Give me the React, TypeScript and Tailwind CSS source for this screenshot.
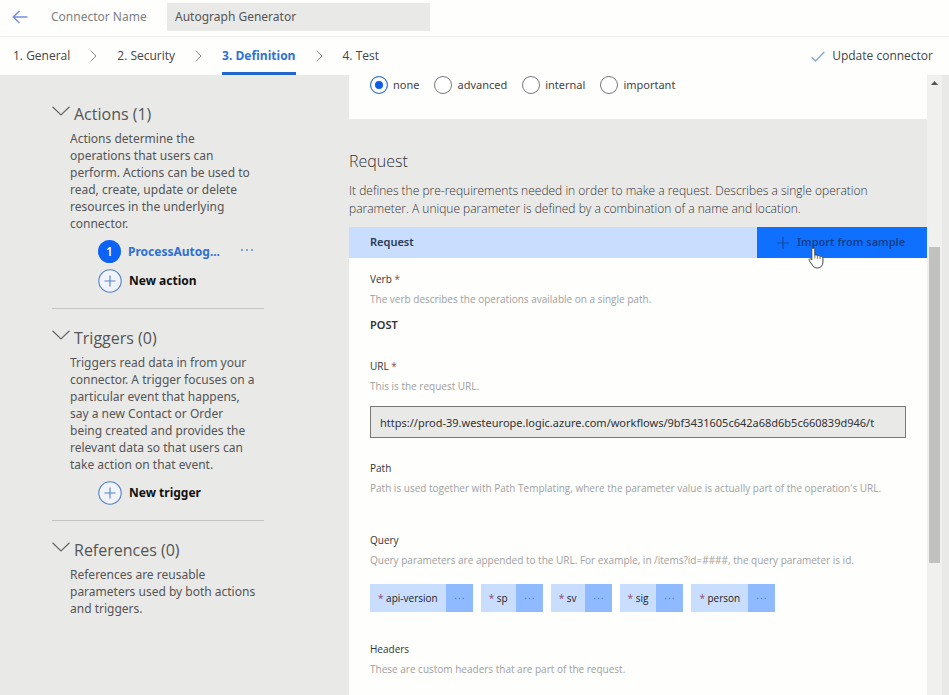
import type { ReactNode } from "react";

const steps = ["1. General", "2. Security", "3. Definition", "4. Test"];
const visibility = ["none", "advanced", "internal", "important"];
const queryParams = ["api-version", "sp", "sv", "sig", "person"];

function Dots({ className }: { className?: string }) {
  return (
    <svg viewBox="0 0 14 4" className={className} fill="currentColor" aria-hidden="true">
      <circle cx="2" cy="2" r="0.9" />
      <circle cx="7" cy="2" r="0.9" />
      <circle cx="12" cy="2" r="0.9" />
    </svg>
  );
}

function NavSection({ title, text, children }: { title: string; text: string; children?: ReactNode }) {
  return (
    <section className="border-b border-[#c4c4c3] pt-[14px] pb-[13px] last:border-b-0">
      <h2 className="flex h-[30px] items-center gap-1 font-['Open_Sans',sans-serif] text-[16px] text-[#555]">
        <svg viewBox="0 0 18 10" className="mb-1.5 h-[10px] w-[18px]" fill="none" stroke="#666" strokeWidth="1.2">
          <path d="M0.5 0.8 9 9 17.5 0.8" />
        </svg>
        {title}
      </h2>
      <p className="pt-px pr-[7px] pl-[18px] text-[12px] leading-[17px] text-[#555]">{text}</p>
      {children && <ul className="pt-[5px] pl-[46px]">{children}</ul>}
    </section>
  );
}

function NewItem({ label }: { label: string }) {
  return (
    <li>
      <button className="flex h-[29px] items-center gap-[7px] text-[12px] font-bold text-[#111]">
        <svg viewBox="0 0 24 24" className="size-6" fill="#f0f4fa" stroke="#5581c4" strokeWidth="1.1">
          <circle cx="12" cy="12" r="11.2" />
          <path d="M12 6.5v11M6.5 12h11" />
        </svg>
        {label}
      </button>
    </li>
  );
}

function FieldLabel({ label, required, help }: { label: string; required?: boolean; help: string }) {
  return (
    <div className="font-['Open_Sans',sans-serif] text-[10px] leading-5">
      <div className="text-[#333]">
        {label}
        {required && <span className="text-[#8a4b50]"> *</span>}
      </div>
      <p className="whitespace-nowrap text-[#a0a0a0]">{help}</p>
    </div>
  );
}

function HandCursor() {
  return (
    <svg viewBox="0 0 17 22" className="pointer-events-none absolute top-5 left-[51px] h-[22px] w-[17px]" aria-hidden="true">
      <path
        d="M5.2 1.2c1 0 1.6.7 1.6 1.6v5.4c.3-.5 2.3-.5 2.6.6.6-.6 2.4-.3 2.6.8.8-.5 2.6-.2 2.9 1.2v4.4c0 3.2-1.9 5.8-5.5 5.8-2.8 0-4.2-1.2-5.3-3.2L1.3 13.5c-.7-1.3.8-2.4 1.9-1.3l.6.8V2.8c0-.9.5-1.6 1.4-1.6z"
        fill="#fff"
        stroke="#444"
        strokeWidth="1"
        strokeLinejoin="round"
      />
      <path d="M6.8 8v3.5M9.4 9v2.8M12 9.8v2.4" stroke="#555" strokeWidth="0.8" />
    </svg>
  );
}

export default function App() {
  return (
    <div className="flex h-screen flex-col overflow-hidden bg-[#fefefd] font-['Noto_Sans',sans-serif]">
      <header className="flex h-[37px] shrink-0 items-center border-b border-[#eeeeed] pb-[3px] pl-3">
        <button aria-label="Back" className="flex">
          <svg viewBox="0 0 16 14" className="h-[14px] w-4" fill="none" stroke="#7790dc" strokeWidth="1.5">
            <path d="M15.5 7H1.5M7.5 1 1.3 7l6.2 6" />
          </svg>
        </button>
        <label htmlFor="connector" className="w-[139px] pl-[23px] text-[12px] text-[#808080]">
          Connector Name
        </label>
        <input
          id="connector"
          defaultValue="Autograph Generator"
          className="h-7 w-[263px] bg-[#e9e9e8] px-2 text-[12px] text-[#555] outline-none"
        />
      </header>

      <div className="flex h-[38px] shrink-0 items-center justify-between pr-4 pl-[13px] font-['Open_Sans',sans-serif]">
        <nav className="flex h-full text-[12px] text-[#444]">
          {steps.map((step, i) => (
            <div key={step} className="flex h-full items-center">
              {i > 0 && (
                <svg viewBox="0 0 7 12" className="mx-5 h-3 w-[7px]" fill="none" stroke="#888" strokeWidth="1">
                  <path d="M0.7 0.7 6 6 0.7 11.3" />
                </svg>
              )}
              {i === 2 ? (
                <a href="#definition" className="flex h-full items-center border-b-[3px] border-[#2266cb] pt-[3px] font-bold text-[#2f6fd6]">
                  {step}
                </a>
              ) : (
                <a href="#step">{step}</a>
              )}
            </div>
          ))}
        </nav>
        <button className="flex items-center gap-[7px] text-[12px] text-[#444]">
          <svg viewBox="0 0 14 11" className="h-[11px] w-[14px]" fill="none" stroke="#7fa9c9" strokeWidth="1.3">
            <path d="M0.6 6.2 4.6 10 13.4 0.8" />
          </svg>
          Update connector
        </button>
      </div>

      <div className="flex min-h-0 flex-1 bg-[#e9e9e8]">
        <aside className="w-[349px] shrink-0 overflow-hidden pt-[10px] pr-[85px] pl-[52px]">
          <NavSection
            title="Actions (1)"
            text="Actions determine the operations that users can perform. Actions can be used to read, create, update or delete resources in the underlying connector."
          >
            <li className="flex h-[29px] items-center text-[12px]">
              <span className="flex size-[23px] items-center justify-center rounded-full bg-[#0b62f5] font-semibold text-white">1</span>
              <a href="#action" className="pl-[7px] font-bold text-[#2f6fd6]">
                ProcessAutog...
              </a>
              <button aria-label="Action menu" className="ml-5 text-[#4f7fd0]">
                <Dots className="mb-1 h-1 w-[14px]" />
              </button>
            </li>
            <NewItem label="New action" />
          </NavSection>
          <NavSection
            title="Triggers (0)"
            text="Triggers read data in from your connector. A trigger focuses on a particular event that happens, say a new Contact or Order being created and provides the relevant data so that users can take action on that event."
          >
            <NewItem label="New trigger" />
          </NavSection>
          <NavSection title="References (0)" text="References are reusable parameters used by both actions and triggers." />
        </aside>

        <main className="min-w-0 flex-1 overflow-hidden">
          <div className="flex h-11 items-start gap-[15px] bg-[#fefefd] pl-[21px]">
            {visibility.map((v) => (
              <label key={v} className="flex h-5 items-center gap-[5px] text-[11px] text-[#444]">
                <input
                  type="radio"
                  name="visibility"
                  defaultChecked={v === "none"}
                  className="size-[18px] appearance-none rounded-full border border-[#777] bg-white checked:border-[#3f74c4] checked:bg-[#0b5fe6] checked:shadow-[inset_0_0_0_4px_#fff]"
                />
                {v}
              </label>
            ))}
          </div>

          <h1 className="pt-[30px] font-['Open_Sans',sans-serif] text-[16px] leading-6 font-light text-[#333]">Request</h1>
          <p className="pt-[9px] pr-10 pb-[9px] font-['Open_Sans',sans-serif] text-[12px] leading-[18px] font-light text-[#333]">
            It defines the pre-requirements needed in order to make a request. Describes a single operation parameter. A unique
            parameter is defined by a combination of a name and location.
          </p>

          <div className="flex h-[31px] bg-[#c9ddff]">
            <h2 className="flex flex-1 items-center pl-[21px] text-[11px] font-semibold text-[#2b3a55]">Request</h2>
            <button className="relative flex w-[170px] items-center gap-2 bg-[#0f70ff] pl-5 text-[11px] font-semibold whitespace-nowrap text-[#123f8c]">
              <svg viewBox="0 0 12 12" className="size-3" fill="none" stroke="#1b4798" strokeWidth="1.2">
                <path d="M6 0v12M0 6h12" />
              </svg>
              Import from sample
              <HandCursor />
            </button>
          </div>

          <div className="h-full bg-[#fefefd] px-[21px] pt-[11px]">
            <FieldLabel label="Verb" required help="The verb describes the operations available on a single path." />
            <p className="pt-1.5 text-[11px] leading-5 font-semibold text-[#333]">POST</p>
            <div className="pt-[21px]">
              <FieldLabel label="URL" required help="This is the request URL." />
              <input
                aria-label="URL"
                readOnly
                defaultValue="https://prod-39.westeurope.logic.azure.com/workflows/9bf3431605c642a68d6b5c660839d946/t"
                className="mt-[10px] block h-8 w-full border border-[#777] bg-[#e9e9e8] px-[9px] text-[11px] text-[#333] outline-none"
              />
            </div>
            <div className="pt-5">
              <FieldLabel label="Path" help="Path is used together with Path Templating, where the parameter value is actually part of the operation's URL." />
            </div>
            <div className="pt-8">
              <FieldLabel label="Query" help="Query parameters are appended to the URL. For example, in /items?id=####, the query parameter is id." />
              <ul className="flex gap-2 pt-[14px]">
                {queryParams.map((name) => (
                  <li key={name} className="flex h-7 items-center bg-[#c9ddff] font-['Open_Sans',sans-serif] text-[10px] text-[#222]">
                    <span className="px-2">
                      <span className="text-[#8a4b70]">* </span>
                      {name}
                    </span>
                    <button aria-label={`${name} menu`} className="flex h-full w-[27px] items-center justify-center bg-[#8fbaff] text-[#5a7fc0]">
                      <Dots className="h-[3px] w-[11px]" />
                    </button>
                  </li>
                ))}
              </ul>
            </div>
            <div className="pt-[27px]">
              <FieldLabel label="Headers" help="These are custom headers that are part of the request." />
            </div>
          </div>
        </main>

        <div className="mr-[7px] flex w-[15px] shrink-0 flex-col items-center bg-[#f0f0ef] pt-1.5 pb-[132px]" aria-hidden="true">
          <svg viewBox="0 0 7 4" className="h-1 w-[7px]" fill="#555">
            <path d="M3.5 0 7 4H0z" />
          </svg>
          <div className="mt-[162px] w-[11px] flex-1 bg-[#c1c1c0]" />
        </div>
      </div>
    </div>
  );
}
